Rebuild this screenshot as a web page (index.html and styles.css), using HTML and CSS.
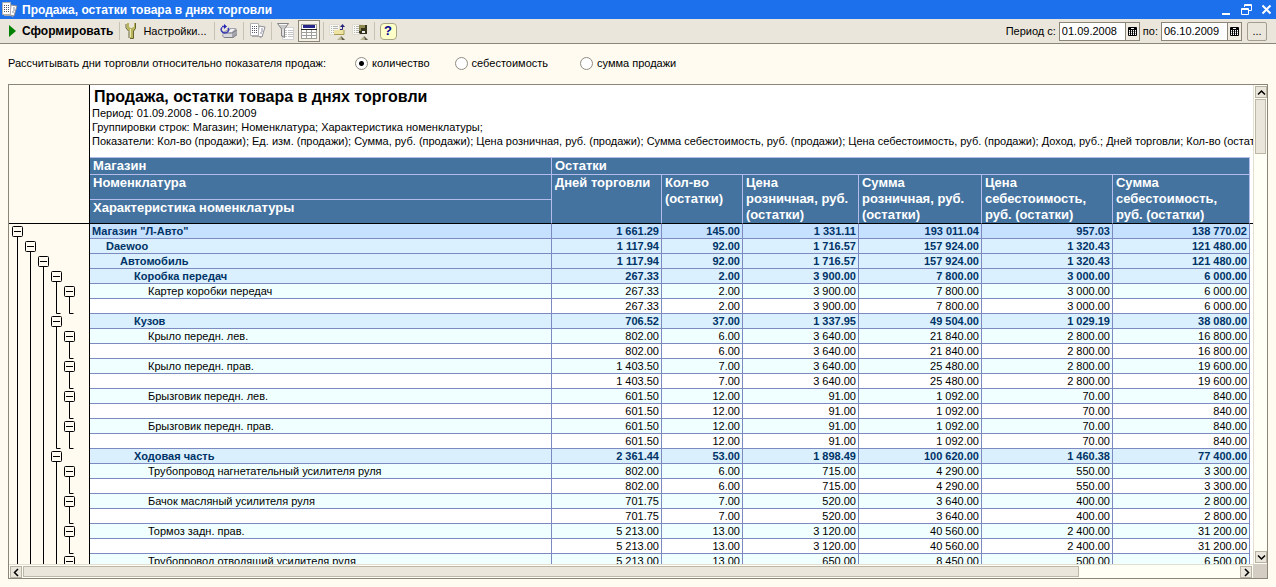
FILE: index.html
```html
<!DOCTYPE html>
<html lang="ru">
<head>
<meta charset="utf-8">
<title>Продажа, остатки товара в днях торговли</title>
<link rel="stylesheet" href="styles.css">
</head>
<body>
<svg class="defs" aria-hidden="true">
  <symbol id="sheets" viewBox="0 0 17 16">
    <path d="M10 3l6 1-3 10-4-1z" fill="#fff" stroke="#8c8c94"/>
    <path d="M12 6h2M12 8h2M11 10h2" stroke="#8a8aa4"/>
    <path d="M1.500 .5h8v12h-8z" fill="#fff" stroke="#b0b0b4"/>
    <path d="M3 3.500h1m1 0h1m1 0h1M3 5.500h1m1 0h1m1 0h1M3 7.500h1m1 0h1m1 0h1M3 9.500h1m1 0h1m1 0h1" stroke="#55556d"/>
    <path d="M3 13.500h7l2 1.500" fill="none" stroke="#aaa"/>
  </symbol>
  <symbol id="calendar" viewBox="0 0 9 9">
    <path d="M.5 .5h8v8h-8z" fill="#fff" stroke="#000"/>
    <path d="M1 1h2v1h3V1h2v2H1zM2 3h1v5H2zm2 0h1v5H4zm2 0h1v5H6z" fill="#000"/>
    <path d="M1 4.500h7M1 6.500h7" stroke="#000" stroke-opacity=".4"/>
  </symbol>
  <symbol id="box" viewBox="0 0 11 11">
    <rect x=".5" y=".5" width="10" height="10" rx="1" fill="#fffbf0" stroke="#000"/>
    <path d="M2 5.500h7" stroke="#000"/>
  </symbol>
  <symbol id="list" viewBox="0 0 17 17">
    <path d="M.5 1.500h10v10H.5z" fill="#f8f8f5" stroke="#dedad0"/>
    <path d="M2 3.500h1m1 0h5M2 5.500h1m1 0h5M2 7.500h1m1 0h5M2 9.500h1m1 0h5" stroke="#b4b4ae"/>
    <path d="M8 17l4-4 4 4z" fill="#b9b593"/><path d="M12 13l4 4h-3z" fill="#5d5b4a"/>
  </symbol>
</svg>

<header class="titlebar">
  <svg class="app-icon" width="17" height="16"><use href="#sheets"/></svg>
  <h1>Продажа, остатки товара в днях торговли</h1>
  <div class="window-buttons">
    <button aria-label="Свернуть"><svg width="11" height="11"><path d="M1 10h8" stroke="#fff" stroke-width="2"/></svg></button>
    <button aria-label="Восстановить"><svg width="11" height="11"><path d="M3.500 3V.5h7v6H8M3 1.500h8" fill="none" stroke="#fff"/><path d="M.5 4.500h7v6h-7zM0 5.500h8" fill="none" stroke="#fff"/></svg></button>
    <button aria-label="Закрыть"><svg width="11" height="11"><path d="M1.500 1.500l8 8m0-8l-8 8" stroke="#fff" stroke-width="2"/></svg></button>
  </div>
</header>

<div class="toolbar">
  <button class="tool run"><svg width="7" height="12"><path d="M0 0l7 6-7 6z" fill="#008000"/></svg>Сформировать</button>
  <span class="sep"></span>
  <button class="tool settings"><svg width="13" height="16"><path d="M2 0v5l2 3h1v7h3V8h1l2-3V0H9v4H8L7 5H6L4 4V0z" fill="#b8b45c"/><path d="M1 1v4l3 3.500V15M10.500 0v5.500L8.500 8v7.500H5" fill="none" stroke="#67652f"/><path d="M5.500 6v8" stroke="#ece9ae"/></svg>Настройки...</button>
  <span class="sep"></span>
  <button class="tool" aria-label="Обновить"><svg width="18" height="16"><path d="M3 9l7-4h6l1 3v4l-4 3H4l-2-2z" fill="#a4a4ac"/><path d="M6 9l5-3h4l-3 3z" fill="#f4f4f4"/><path d="M3 11h9v3H4z" fill="#d9d9dd"/><path d="M12 10l5-3M4 14.500h9l4-3" fill="none" stroke="#808088"/><path d="M2 4.500C0 7 2 10 5 10c3 0 4.500-3 3-5M2 3.500h3" fill="none" stroke="#3a3ab4" stroke-width="1.500"/><path d="M4 1l3 2.500-3 2.500z" fill="#2424b4"/></svg></button>
  <span class="sep"></span>
  <button class="tool" aria-label="Открыть отчет"><svg width="17" height="16"><use href="#sheets"/></svg></button>
  <span class="sep"></span>
  <button class="tool" aria-label="Отбор"><svg width="17" height="17"><path d="M5.500 4.500h11v12h-11z" fill="#fff" stroke="#d0d0d0"/><path d="M7 7.500h3m1 0h5M7 9.500h3m1 0h5M7 11.500h3m1 0h5M7 13.500h3m1 0h5" stroke="#c4c4c4"/><path d="M.5.500h11L7.500 6v8.500l-3-1.500V6z" fill="#c8c8c8" stroke="#858585"/><path d="M2 1.500h8M6 6v6" stroke="#f7f7f7"/></svg></button>
  <button class="tool pressed" aria-label="Заголовок" aria-pressed="true"><svg width="16" height="15"><path d="M0 0h16v15H0z" fill="#fff"/><path d="M2 1h12v3H2z" fill="#26268c"/><path d="M.5 0v15M15.500 0v15M0 .5h16M0 8.500h16M0 11.500h16M0 14.500h16M5.500 6v9M10.500 6v9" stroke="#a0a09a"/><path d="M0 5.500h16" stroke="#222"/></svg></button>
  <span class="sep"></span>
  <button class="tool" aria-label="Загрузить настройки"><svg width="17" height="17"><use href="#list"/><path d="M5 11V7h4l1-1h5v5z" fill="#eee3a1"/><path d="M5 11.500h10V7" fill="none" stroke="#a59a50"/><path d="M11 6.500h2.500V2" fill="none" stroke="#23237c"/><path d="M11 4l2.500-3L16 4z" fill="#23237c"/></svg></button>
  <button class="tool" aria-label="Сохранить настройки"><svg width="17" height="17"><use href="#list"/><path d="M7 2h8v9H8l-1-1z" fill="#35331c"/><path d="M7 2h2v6H7z" fill="#8d8950"/><path d="M9 2h4v3H9z" fill="#8d8950"/><path d="M10 8h3v2h-3z" fill="#eee"/></svg></button>
  <span class="sep"></span>
  <button class="tool help" aria-label="Справка">?</button>

  <div class="period">
    <label for="from">Период с:</label>
    <span class="date"><input id="from" type="text" value="01.09.2008"><button aria-label="Календарь"><svg width="9" height="9"><use href="#calendar"/></svg></button></span>
    <label for="to">по:</label>
    <span class="date"><input id="to" type="text" value="06.10.2009"><button aria-label="Календарь"><svg width="9" height="9"><use href="#calendar"/></svg></button></span>
    <button class="more" aria-label="Выбрать период">...</button>
  </div>
</div>

<div class="options" role="radiogroup" aria-labelledby="basis">
  <span class="basis" id="basis">Рассчитывать дни торговли относительно показателя продаж:</span>
  <label><input type="radio" name="basis" checked>количество</label>
  <label><input type="radio" name="basis">себестоимость</label>
  <label><input type="radio" name="basis">сумма продажи</label>
</div>

<main class="report">
  <div class="gutter">
    <div class="corner"></div>
    <svg class="tree" width="80" height="341">
      <path d="M8.500 13v328M21.500 28v313M34.500 43v298M47.500 58v31.500h4M60.500 73v16.500h4M47.500 103v121.500h4M60.500 118v16.500h4M60.500 148v16.500h4M60.500 178v16.500h4M60.500 208v16.500h4M47.500 238v103M60.500 253v16.500h4M60.500 283v16.500h4M60.500 313v16.500h4" fill="none" stroke="#000"/>
      <g>
        <use href="#box" x="3" y="2" width="11" height="11"/><use href="#box" x="16" y="17" width="11" height="11"/>
        <use href="#box" x="29" y="32" width="11" height="11"/><use href="#box" x="42" y="47" width="11" height="11"/>
        <use href="#box" x="55" y="62" width="11" height="11"/><use href="#box" x="42" y="92" width="11" height="11"/>
        <use href="#box" x="55" y="107" width="11" height="11"/><use href="#box" x="55" y="137" width="11" height="11"/>
        <use href="#box" x="55" y="167" width="11" height="11"/><use href="#box" x="55" y="197" width="11" height="11"/>
        <use href="#box" x="42" y="227" width="11" height="11"/><use href="#box" x="55" y="242" width="11" height="11"/>
        <use href="#box" x="55" y="272" width="11" height="11"/><use href="#box" x="55" y="302" width="11" height="11"/>
        <use href="#box" x="55" y="332" width="11" height="11"/>
      </g>
    </svg>
  </div>

  <div class="sheet">
    <div class="summary">
      <h2>Продажа, остатки товара в днях торговли</h2>
      <p>Период: 01.09.2008 - 06.10.2009</p>
      <p>Группировки строк: Магазин; Номенклатура; Характеристика номенклатуры;</p>
      <p>Показатели: Кол-во (продажи); Ед. изм. (продажи); Сумма, руб. (продажи); Цена розничная, руб. (продажи); Сумма себестоимость, руб. (продажи); Цена себестоимость, руб. (продажи); Доход, руб.; Дней торговли; Кол-во (остатки)</p>
    </div>
    <table>
      <colgroup><col><col class="c-days"><col class="c-qty"><col class="c-price"><col class="c-sum"><col class="c-cost"><col class="c-total"><col class="c-end"></colgroup>
      <thead>
        <tr class="h-shop"><th>Магазин</th><th colspan="6">Остатки</th><td class="end" rowspan="3"></td></tr>
        <tr class="h-item"><th>Номенклатура</th><th rowspan="2">Дней торговли</th><th rowspan="2">Кол-во<br>(остатки)</th><th rowspan="2">Цена<br>розничная, руб.<br>(остатки)</th><th rowspan="2">Сумма<br>розничная, руб.<br>(остатки)</th><th rowspan="2">Цена<br>себестоимость,<br>руб. (остатки)</th><th rowspan="2">Сумма<br>себестоимость,<br>руб. (остатки)</th></tr>
        <tr class="h-kind"><th>Характеристика номенклатуры</th></tr>
      </thead>
      <tbody>
        <tr class="shop"><td>Магазин "Л-Авто"</td><td>1 661.29</td><td>145.00</td><td>1 331.11</td><td>193 011.04</td><td>957.03</td><td>138 770.02</td></tr>
        <tr class="group l1"><td>Daewoo</td><td>1 117.94</td><td>92.00</td><td>1 716.57</td><td>157 924.00</td><td>1 320.43</td><td>121 480.00</td></tr>
        <tr class="group l2"><td>Автомобиль</td><td>1 117.94</td><td>92.00</td><td>1 716.57</td><td>157 924.00</td><td>1 320.43</td><td>121 480.00</td></tr>
        <tr class="group l3"><td>Коробка передач</td><td>267.33</td><td>2.00</td><td>3 900.00</td><td>7 800.00</td><td>3 000.00</td><td>6 000.00</td></tr>
        <tr class="item"><td>Картер коробки передач</td><td>267.33</td><td>2.00</td><td>3 900.00</td><td>7 800.00</td><td>3 000.00</td><td>6 000.00</td></tr>
        <tr><td></td><td>267.33</td><td>2.00</td><td>3 900.00</td><td>7 800.00</td><td>3 000.00</td><td>6 000.00</td></tr>
        <tr class="group l3"><td>Кузов</td><td>706.52</td><td>37.00</td><td>1 337.95</td><td>49 504.00</td><td>1 029.19</td><td>38 080.00</td></tr>
        <tr class="item"><td>Крыло передн. лев.</td><td>802.00</td><td>6.00</td><td>3 640.00</td><td>21 840.00</td><td>2 800.00</td><td>16 800.00</td></tr>
        <tr><td></td><td>802.00</td><td>6.00</td><td>3 640.00</td><td>21 840.00</td><td>2 800.00</td><td>16 800.00</td></tr>
        <tr class="item"><td>Крыло передн. прав.</td><td>1 403.50</td><td>7.00</td><td>3 640.00</td><td>25 480.00</td><td>2 800.00</td><td>19 600.00</td></tr>
        <tr><td></td><td>1 403.50</td><td>7.00</td><td>3 640.00</td><td>25 480.00</td><td>2 800.00</td><td>19 600.00</td></tr>
        <tr class="item"><td>Брызговик передн. лев.</td><td>601.50</td><td>12.00</td><td>91.00</td><td>1 092.00</td><td>70.00</td><td>840.00</td></tr>
        <tr><td></td><td>601.50</td><td>12.00</td><td>91.00</td><td>1 092.00</td><td>70.00</td><td>840.00</td></tr>
        <tr class="item"><td>Брызговик передн. прав.</td><td>601.50</td><td>12.00</td><td>91.00</td><td>1 092.00</td><td>70.00</td><td>840.00</td></tr>
        <tr><td></td><td>601.50</td><td>12.00</td><td>91.00</td><td>1 092.00</td><td>70.00</td><td>840.00</td></tr>
        <tr class="group l3"><td>Ходовая часть</td><td>2 361.44</td><td>53.00</td><td>1 898.49</td><td>100 620.00</td><td>1 460.38</td><td>77 400.00</td></tr>
        <tr class="item"><td>Трубопровод нагнетательный усилителя руля</td><td>802.00</td><td>6.00</td><td>715.00</td><td>4 290.00</td><td>550.00</td><td>3 300.00</td></tr>
        <tr><td></td><td>802.00</td><td>6.00</td><td>715.00</td><td>4 290.00</td><td>550.00</td><td>3 300.00</td></tr>
        <tr class="item"><td>Бачок масляный усилителя руля</td><td>701.75</td><td>7.00</td><td>520.00</td><td>3 640.00</td><td>400.00</td><td>2 800.00</td></tr>
        <tr><td></td><td>701.75</td><td>7.00</td><td>520.00</td><td>3 640.00</td><td>400.00</td><td>2 800.00</td></tr>
        <tr class="item"><td>Тормоз задн. прав.</td><td>5 213.00</td><td>13.00</td><td>3 120.00</td><td>40 560.00</td><td>2 400.00</td><td>31 200.00</td></tr>
        <tr><td></td><td>5 213.00</td><td>13.00</td><td>3 120.00</td><td>40 560.00</td><td>2 400.00</td><td>31 200.00</td></tr>
        <tr class="item"><td>Трубопровод отводящий усилителя руля</td><td>5 213.00</td><td>13.00</td><td>650.00</td><td>8 450.00</td><td>500.00</td><td>6 500.00</td></tr>
      </tbody>
    </table>
  </div>

  <div class="scroll vertical">
    <button aria-label="Вверх"><svg width="9" height="9"><path d="M1 6.500l3.500-3.500L8 6.500" fill="none" stroke="#000" stroke-width="1.500"/></svg></button>
    <div class="thumb"></div>
    <button class="last" aria-label="Вниз"><svg width="9" height="9"><path d="M1 2.500L4.500 6 8 2.500" fill="none" stroke="#000" stroke-width="1.500"/></svg></button>
  </div>
  <div class="scroll horizontal">
    <button aria-label="Влево"><svg width="9" height="9"><path d="M6 1L2.500 4.500 6 8" fill="none" stroke="#000" stroke-width="1.500"/></svg></button>
    <div class="thumb"></div>
    <button class="last" aria-label="Вправо"><svg width="9" height="9"><path d="M3 1l3.500 3.500L3 8" fill="none" stroke="#000" stroke-width="1.500"/></svg></button>
  </div>
  <div class="grip"></div>
</main>
</body>
</html>
```
FILE: styles.css
```css
* { box-sizing: border-box; }

body {
  margin: 0;
  height: 100vh;
  display: flex;
  flex-direction: column;
  overflow: hidden;
  background: #fffbf0;
  color: #000;
  font: 11px/14px "Liberation Sans", Arial, sans-serif;
}

svg { display: block; flex: none; }
h1, h2, p { margin: 0; }
button, input { font: inherit; color: inherit; margin: 0; padding: 0; }
button { border: 0; background: none; display: flex; align-items: center; justify-content: center; }
.defs { position: absolute; width: 0; height: 0; }

.titlebar {
  display: flex;
  align-items: center;
  height: 19px;
  flex: none;
  padding: 0 4px 0 1px;
  background: #1c70ec;
  color: #fff;
}
.app-icon { margin-right: 4px; }
.titlebar h1 { font-size: 12px; line-height: 16px; }
.window-buttons { display: flex; gap: 9px; margin-left: auto; }

.toolbar {
  display: flex;
  align-items: center;
  height: 25px;
  flex: none;
  padding: 0 9px;
  background: #ebe6db;
  border-bottom: 1px solid #8c8678;
}
.tool { height: 22px; min-width: 17px; margin: 0 3px; }
.run { margin: 0; gap: 6px; font-size: 12px; font-weight: bold; }
.settings { gap: 5px; margin: 0 5px 0 3px; }
.sep { width: 1px; height: 18px; margin: 0 2px; background: #c8c2b4; }
.run + .sep { margin-left: 6px; }
.tool.pressed { width: 22px; margin: 0 1px; border: 1px solid #8c8678; background: #f4f0e6; }
.tool.help {
  width: 17px;
  height: 17px;
  border: 1px solid #a8a488;
  border-radius: 4px;
  background: #ffffc8;
  color: #000090;
  font-weight: bold;
  font-size: 13px;
}
.period { display: flex; align-items: center; gap: 3px; margin-left: auto; }
.date { display: flex; height: 19px; width: 81px; border: 1px solid #8c8678; background: #fff; }
.date input { flex: 1; min-width: 0; padding-left: 2px; border: 0; background: #fff; }
.date button { width: 14px; border-left: 1px solid #8c8678; background: #f1ece1; }
.more { width: 20px; height: 19px; margin-left: 2px; border: 1px solid #a39d8f; border-radius: 2px; background: #ebe6db; }

.options { display: flex; align-items: center; height: 40px; flex: none; padding: 0 8px 2px; }
.basis { width: 347px; }
.options label { display: flex; align-items: center; gap: 4px; }
.options label + label { margin-left: 25px; }
.options label + label + label { margin-left: 32px; }
.options input {
  appearance: none;
  width: 13px;
  height: 13px;
  border: 1px solid #8f8b80;
  border-radius: 50%;
  background: #fff;
}
.options input:checked { background: radial-gradient(circle, #000 0 2px, #fff 3px); }

.report {
  flex: 1;
  min-height: 0;
  display: grid;
  grid-template: minmax(0, 1fr) 14px / 81px minmax(0, 1fr) 14px;
  margin: 0 8px 8px;
  border: 1px solid #8c8678;
}
.gutter { overflow: hidden; border-right: 1px solid #000; }
.corner { height: 139px; border-bottom: 1px solid #000; }

.sheet { overflow: hidden; background: #fff; }
.summary { height: 72px; padding: 2px 2px 0; white-space: nowrap; }
.summary h2 { padding-left: 2px; font-size: 16px; line-height: 19px; }

table { width: 100%; table-layout: fixed; border-collapse: separate; border-spacing: 0; }
.c-days { width: 110px; }
.c-qty { width: 81px; }
.c-price { width: 116px; }
.c-sum { width: 123px; }
.c-cost { width: 131px; }
.c-total { width: 137px; }
.c-end { width: 3px; }

th {
  padding: 0 3px;
  border-right: 1px solid #b4bcec;
  border-bottom: 1px solid #b4bcec;
  background: #4473a0;
  color: #fff;
  font-size: 13px;
  line-height: 16px;
  text-align: left;
  vertical-align: top;
  white-space: nowrap;
}
.h-shop { height: 18px; }
.h-shop th { border-top: 1px solid #b4bcec; }
.h-item { height: 25px; }
.h-kind { height: 24px; }
.h-item th[rowspan], .h-kind th { border-bottom-color: #000; }
.end { padding: 0; border-bottom: 1px solid #000; }

tbody td {
  height: 15px;
  padding: 0 2px;
  border-right: 1px solid #7d8ac2;
  border-bottom: 1px solid #7d8ac2;
  line-height: 14px;
  text-align: right;
  white-space: nowrap;
}
tbody td:first-child { text-align: left; }
.shop, .group { color: #003366; font-weight: bold; }
.shop { background: #c6e0ff; }
.group { background: #daf0ff; }
.item { background: #f0ffff; }
.l1 td:first-child { padding-left: 16px; }
.l2 td:first-child { padding-left: 30px; }
.l3 td:first-child { padding-left: 44px; }
.item td:first-child { padding-left: 58px; }

.scroll { display: flex; gap: 1px; padding: 1px; background: #fffff5; }
.scroll button { width: 12px; height: 12px; flex: none; border: 1px solid #b8b2a4; background: #ebe6db; }
.scroll .thumb { border: 1px solid #bdb7a8; background: #ebe6db; }
.scroll .last { margin-top: auto; }
.vertical { flex-direction: column; border-left: 1px solid #e4dfd3; }
.vertical .thumb { height: 55px; }
.horizontal { grid-column: 1 / 3; border-top: 1px solid #e4dfd3; }
.horizontal .thumb { width: 85%; }
.horizontal .last { margin: 0 0 0 auto; }
.grip { background: #d4cdc4; }
```
